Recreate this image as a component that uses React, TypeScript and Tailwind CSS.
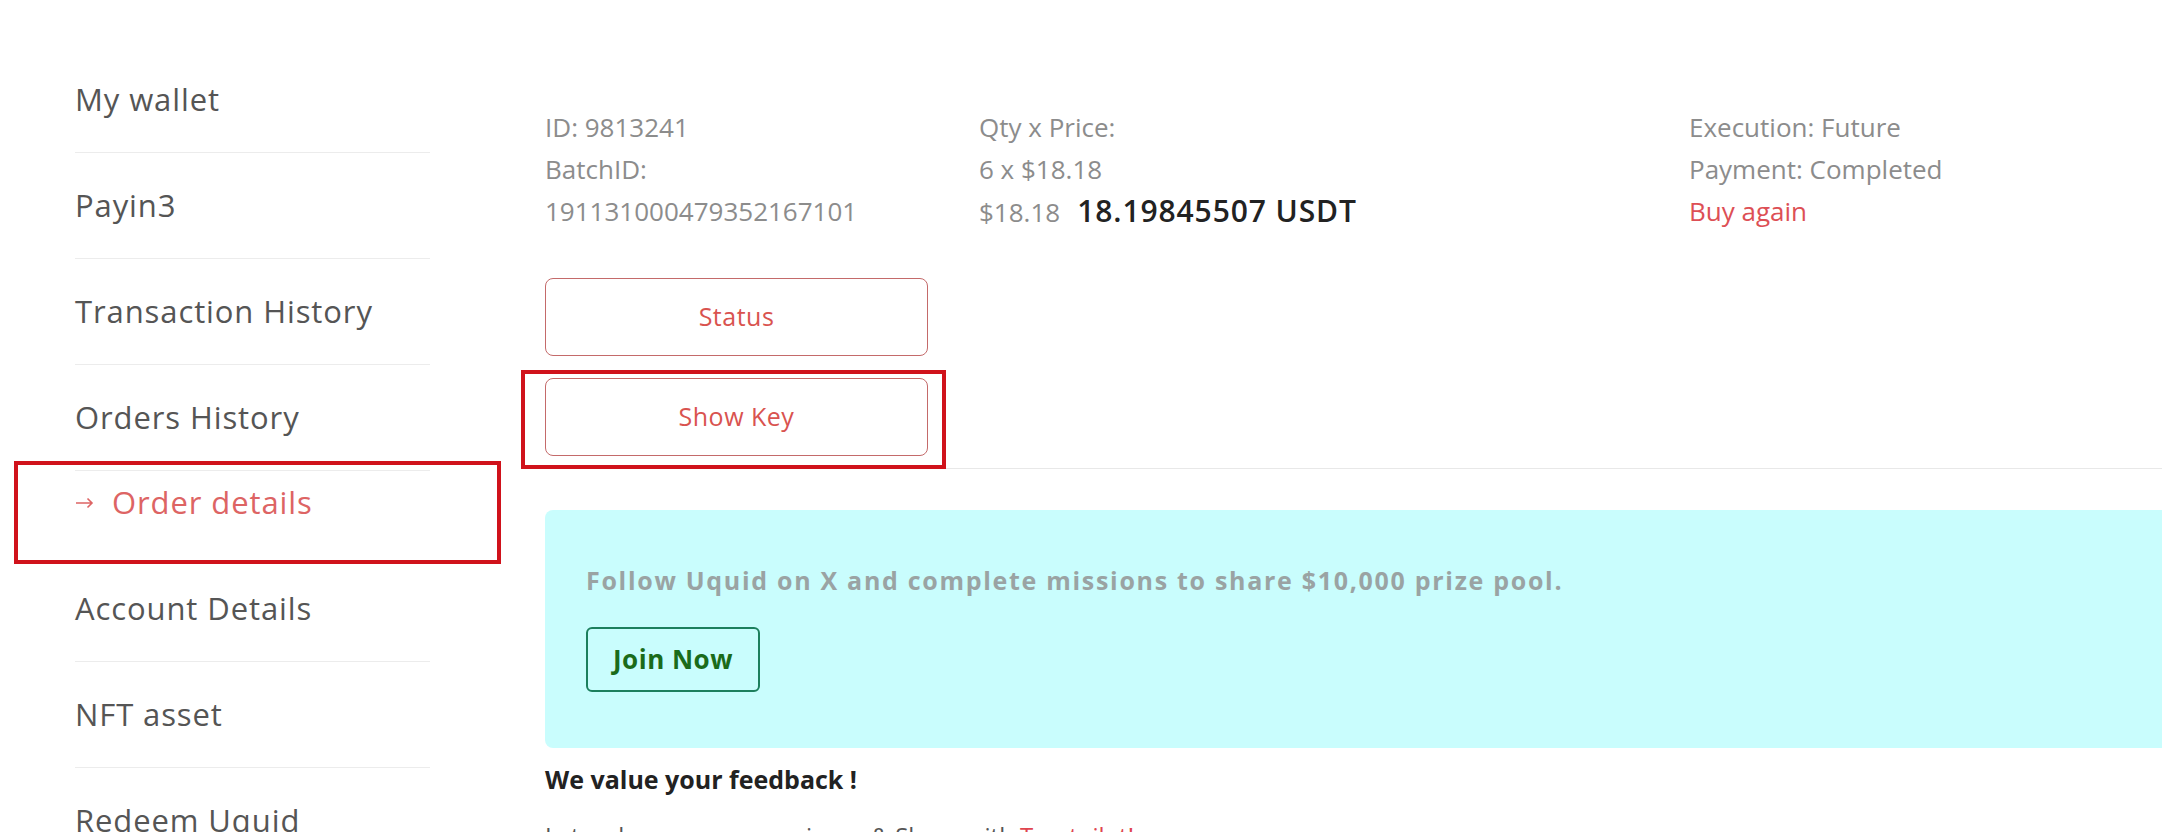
import React from 'react';

const menu = [
  { label: 'My wallet' },
  { label: 'Payin3' },
  { label: 'Transaction History' },
  { label: 'Orders History' },
  { label: 'Order details', active: true },
  { label: 'Account Details' },
  { label: 'NFT asset' },
  { label: 'Redeem Uquid' },
];

function Arrow() {
  return (
    <svg width="19" height="12" viewBox="0 0 19 12" fill="none" stroke="currentColor" strokeWidth="1.6">
      <path d="M1 6h16M12.5 1.5 17 6l-4.5 4.5" />
    </svg>
  );
}

function Sidebar() {
  return (
    <aside className="w-[430px] shrink-0 pl-[75px] pt-[47px]">
      <ul>
        {menu.map((item) =>
          item.active ? (
            <li
              key={item.label}
              className="flex items-center gap-[18px] pt-[17px] pb-[39px] text-[31px] leading-[29px] tracking-[0.9px] text-[#dd6464]"
            >
              <Arrow />
              {item.label}
            </li>
          ) : (
            <li
              key={item.label}
              className="border-b border-[#ececec] py-[38px] text-[31px] leading-[29px] tracking-[0.9px] text-[#555] last:border-b-0"
            >
              {item.label}
            </li>
          )
        )}
      </ul>
    </aside>
  );
}

function OrderInfo() {
  return (
    <div className="grid grid-cols-[434px_710px_1fr] text-[26px] leading-[42px] text-[#8c8c8c]">
      <div>
        <div>ID: 9813241</div>
        <div>BatchID:</div>
        <div>191131000479352167101</div>
      </div>
      <div>
        <div>Qty x Price:</div>
        <div>6 x $18.18</div>
        <div>
          $18.18
          <span className="ml-[17px] text-[30px] font-semibold tracking-[0.9px] text-[#222]">18.19845507 USDT</span>
        </div>
      </div>
      <div>
        <div>Execution: Future</div>
        <div>Payment: Completed</div>
        <div className="text-[#dd4f55]">Buy again</div>
      </div>
    </div>
  );
}

export default function App() {
  return (
    <div className="relative flex h-[832px] w-[2162px] overflow-hidden bg-white font-['Open_Sans',sans-serif]">
      <Sidebar />

      <main className="flex-1 pl-[115px] pt-[106px]">
        <OrderInfo />

        <div className="mt-[45px] flex w-[383px] flex-col gap-[22px]">
          <button className="h-[78px] rounded-[8px] border border-[#c46a6a] text-[25px] tracking-[0.5px] text-[#d9534f]">
            Status
          </button>
          <button className="h-[78px] rounded-[8px] border border-[#c46a6a] text-[25px] tracking-[0.5px] text-[#d9534f]">
            Show Key
          </button>
        </div>

        <div className="mt-[12px] h-px bg-[#e8e8e8]" />

        <div className="mt-[41px] h-[238px] rounded-l-[8px] bg-[#c9fdfd] pl-[41px] pt-[54px]">
          <p className="text-[25px] font-bold leading-[32px] tracking-[1.7px] text-[#9aa3a3]">
            Follow Uquid on X and complete missions to share $10,000 prize pool.
          </p>
          <button className="mt-[31px] h-[65px] w-[174px] rounded-[6px] border-2 border-[#1c7f5d] text-[26px] font-bold tracking-[0.5px] text-[#1a6b1a]">
            Join Now
          </button>
        </div>

        <h4 className="mt-[16px] text-[25px] font-bold leading-[30px] text-[#222]">We value your feedback !</h4>
        <p className="mt-[28px] text-[24px] leading-[28px] text-[#555]">
          Let us know your experience &amp; Share with <span className="text-[#e0454f]">Trustpilot!</span>
        </p>
      </main>

      {/* annotation boxes drawn over the page */}
      <div className="pointer-events-none absolute left-[14px] top-[461px] h-[103px] w-[487px] border-4 border-[#d0121b]" />
      <div className="pointer-events-none absolute left-[521px] top-[370px] h-[99px] w-[425px] border-4 border-[#d0121b]" />
    </div>
  );
}
